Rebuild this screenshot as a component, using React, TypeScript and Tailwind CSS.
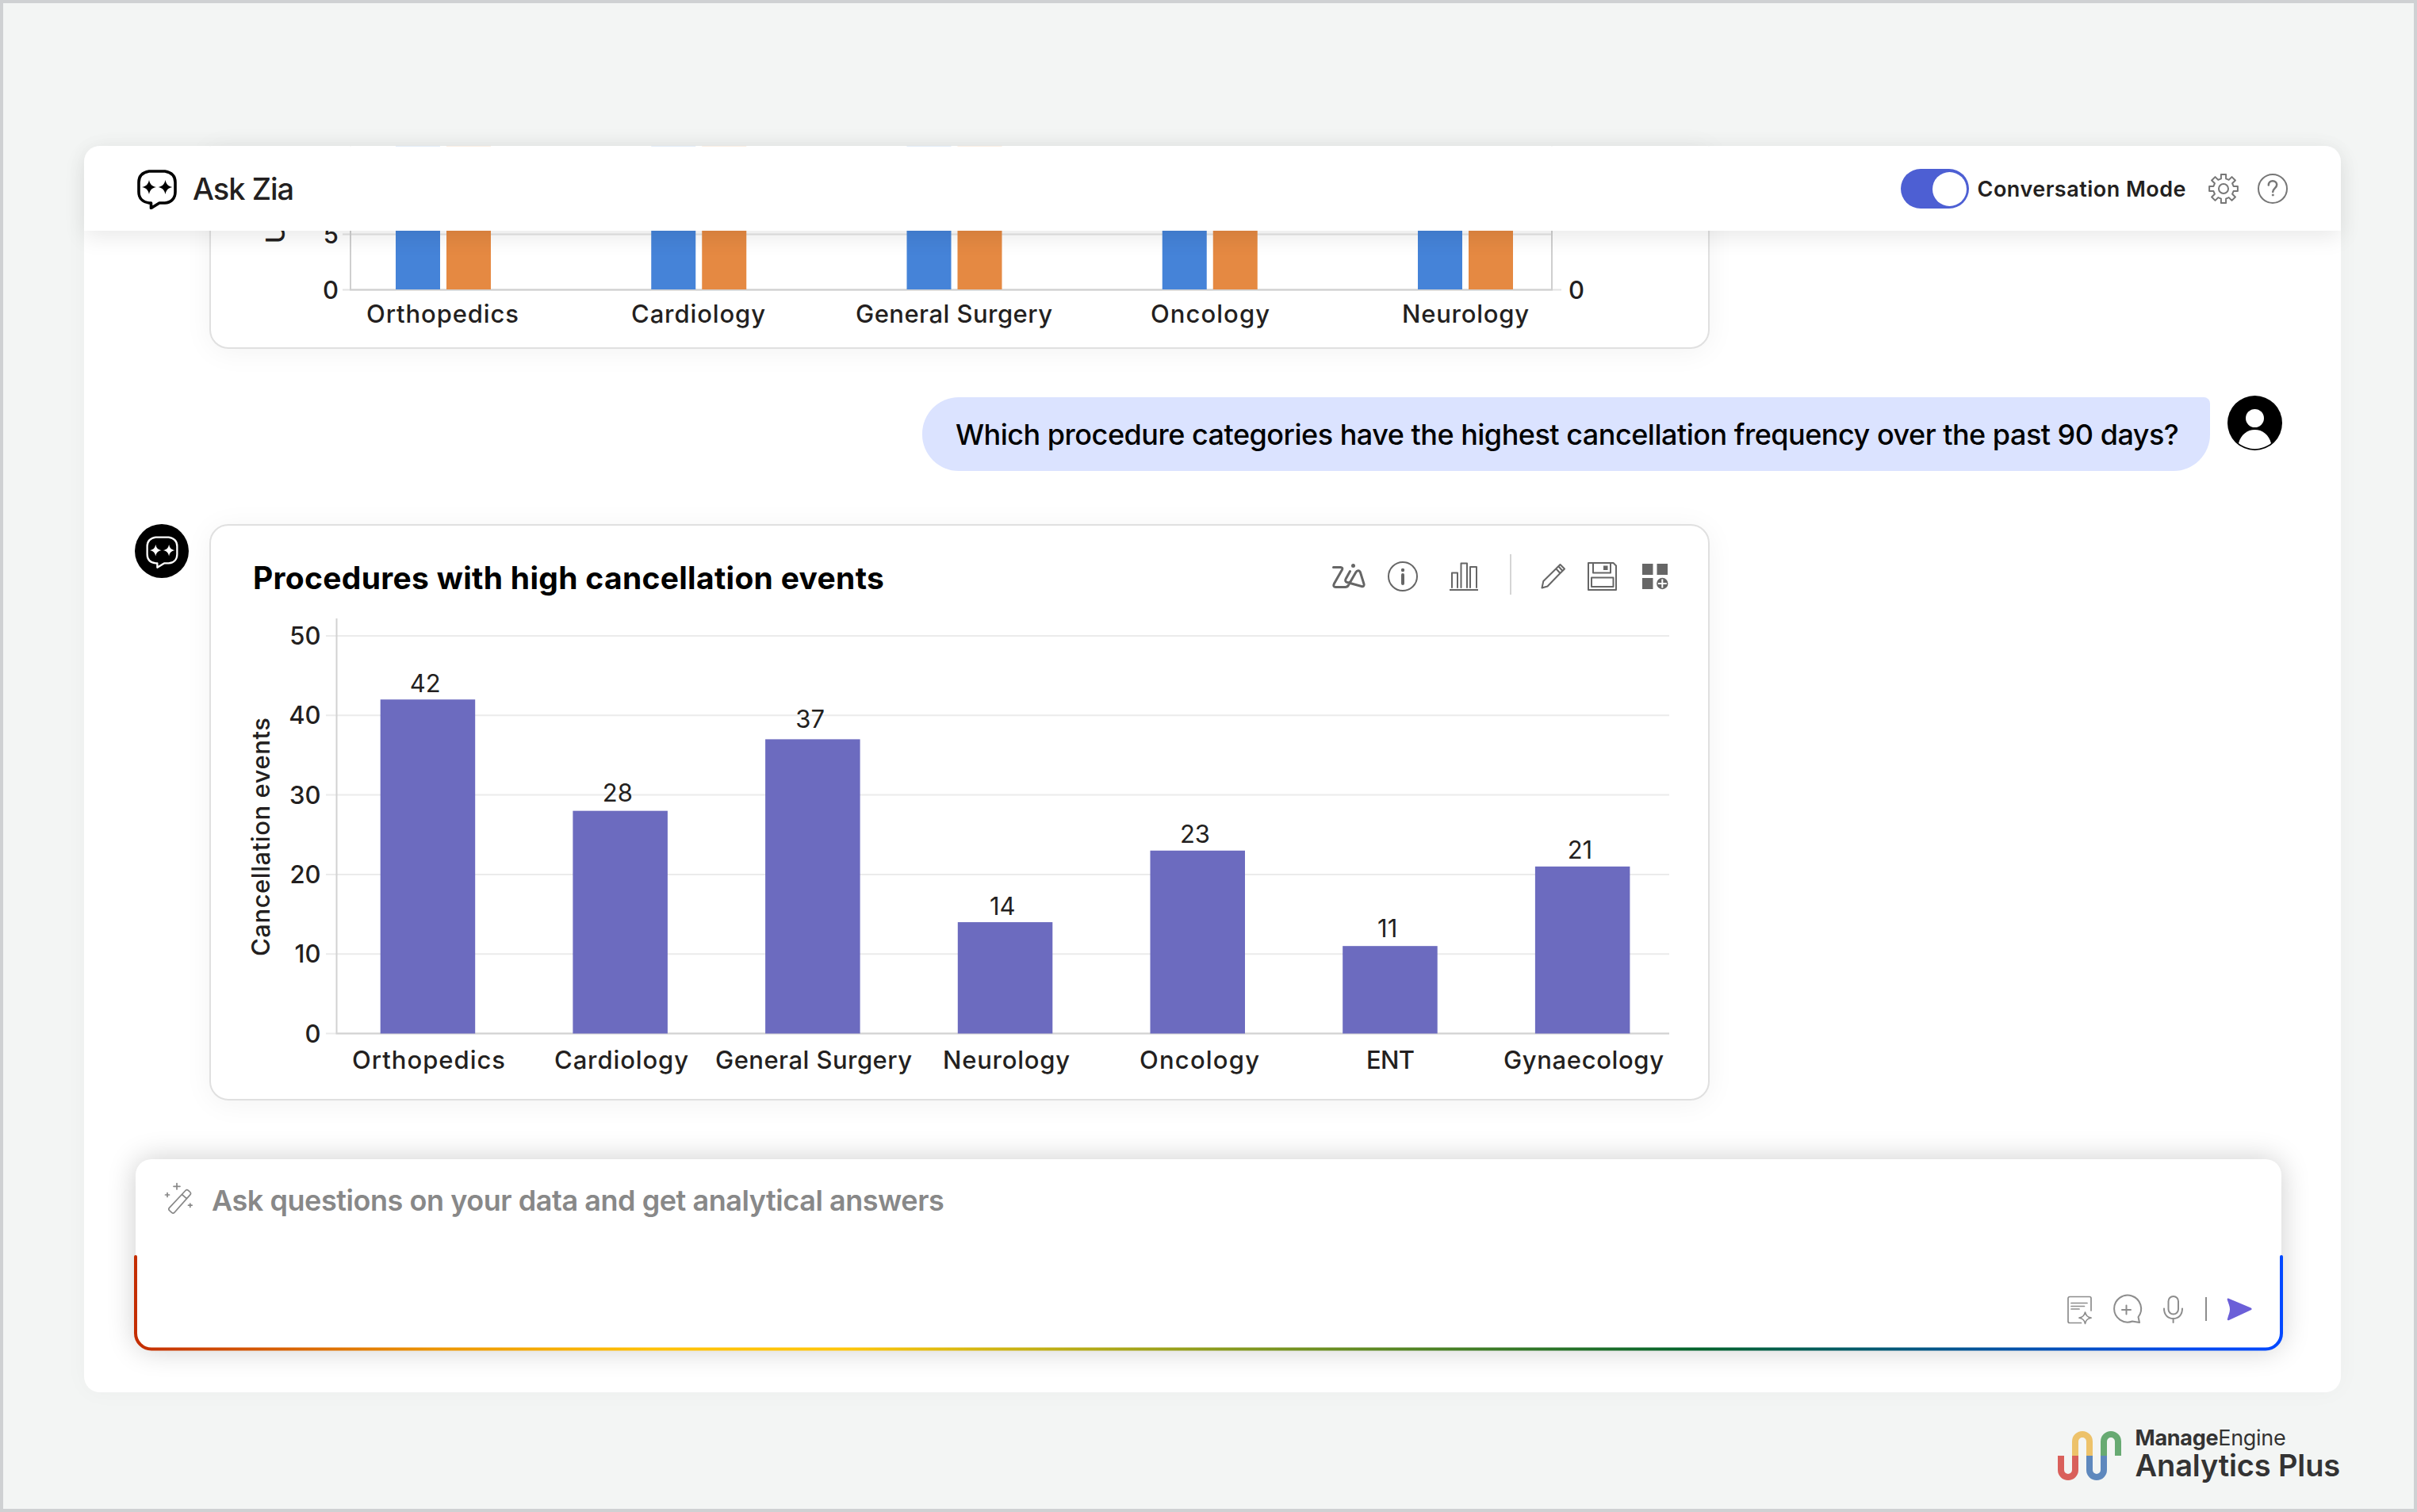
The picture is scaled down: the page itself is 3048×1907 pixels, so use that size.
import type { ReactNode } from 'react'

const FONT = "Inter, 'Liberation Sans', sans-serif"

// label = [left edge, width], gap = space between the bar and its value
const procedures = [
  { name: 'Orthopedics', value: 42, label: [444, 193], gap: 9 },
  { name: 'Cardiology', value: 28, label: [699, 169], gap: 12 },
  { name: 'General Surgery', value: 37, label: [902, 248], gap: 14 },
  { name: 'Neurology', value: 14, label: [1189, 160], gap: 9 },
  { name: 'Oncology', value: 23, label: [1437, 151], gap: 10 },
  { name: 'ENT', value: 11, label: [1723, 61], gap: 11 },
  { name: 'Gynaecology', value: 21, label: [1896, 202], gap: 10 },
]

const utilization = [
  { name: 'Orthopedics', label: [462, 192], top: 180 },
  { name: 'Cardiology', label: [796, 169], top: 180 },
  { name: 'General Surgery', label: [1079, 248], top: 180 },
  { name: 'Oncology', label: [1451, 150], top: 186 },
  { name: 'Neurology', label: [1768, 160], top: 186 },
]

function ZiaFace({ className, strokeWidth = 3.6 }: { className?: string; strokeWidth?: number }) {
  return (
    <svg viewBox="0 0 50 50" className={className} fill="none" stroke="currentColor" strokeWidth={strokeWidth}>
      <path d="M15 2h20C44 3.500 48 9 48 16v12c0 8-5 13.500-13 14h-7l-10.500 6.500V42H15C7 41 2 36 2 28V16C2 9 6 3.500 15 2z" strokeLinejoin="round" />
      <path d="M15 13c1.300 5.500 3 7.500 9 9-6 1.500-7.700 3.500-9 9-1.300-5.500-3-7.500-9-9 6-1.500 7.700-3.500 9-9zM35.500 13c1.300 5.500 3 7.500 9 9-6 1.500-7.700 3.500-9 9-1.300-5.500-3-7.500-9-9 6-1.500 7.700-3.500 9-9z" fill="currentColor" stroke="none" />
    </svg>
  )
}

function Icon({ w, h, className, children }: { w: number; h: number; className?: string; children: ReactNode }) {
  return (
    <svg width={w} height={h} viewBox={`0 0 ${w} ${h}`} fill="none" stroke="currentColor" strokeWidth={2} strokeLinejoin="round" strokeLinecap="round" className={`shrink-0 overflow-visible ${className ?? ''}`}>
      {children}
    </svg>
  )
}

function gearPath() {
  const pts: string[] = []
  for (let i = 0; i < 8; i++) {
    const base = (i * Math.PI) / 4
    const steps: [number, number][] = [[-0.24, 13], [-0.17, 18.2], [0.17, 18.2], [0.24, 13]]
    steps.forEach(([da, r]) => {
      const x = 19 + r * Math.sin(base + da)
      const y = 19 - r * Math.cos(base + da)
      pts.push(`${x.toFixed(1)} ${y.toFixed(1)}`)
    })
  }
  return `M${pts.join('L')}Z`
}

function Header() {
  return (
    <header className="relative z-10 flex h-[107px] shrink-0 items-center rounded-t-[20px] border-t border-white/85 bg-white bg-clip-padding pl-[67px] pr-[67px] shadow-[0_8px_28px_rgba(0,0,0,0.09)]">
      <ZiaFace className="mt-[2px] size-[50px]" />
      <h1 className="ml-[20px] text-[38px] font-medium leading-none tracking-[-1px] text-[#231f20]">Ask Zia</h1>
      <div className="ml-auto flex items-center">
        <div className="flex h-[50px] w-[86px] items-center justify-end rounded-full bg-[#4d5fd3] pr-[3px]">
          <div className="size-[43px] rounded-full bg-white" />
        </div>
        <span className="ml-[11px] whitespace-nowrap text-[27px] font-semibold leading-none tracking-[0.48px] text-[#231f20]">Conversation Mode</span>
        <Icon w={38} h={38} className="ml-[28px] text-[#777]">
          <path d={gearPath()} />
          <circle cx={19} cy={19} r={6} />
        </Icon>
        <Icon w={38} h={38} className="ml-[24px] text-[#777]">
          <circle cx={19} cy={19} r={18} />
          <path d="M13.800 14.500c0-3.200 2.200-5.200 5.200-5.200s5.200 2 5.200 4.800c0 4.200-5 4.400-5 9" strokeWidth={2.500} />
          <circle cx={19.200} cy={27} r={1} fill="currentColor" strokeWidth={1} />
        </Icon>
      </div>
    </header>
  )
}

// Both charts use page coordinates in their viewBox
function UtilizationChart() {
  return (
    <svg viewBox="266 184 1888 254" className="block h-[254px] w-[1888px]" fontFamily={FONT} fontSize={31} fontWeight={550} fill="#231f20">
      <path d="M432 295.500H1957" stroke="#e3e3e3" strokeWidth={2} />
      <path d="M432 365.500H1969" stroke="#e3e3e3" strokeWidth={2} />
      <path d="M442 184V365.500H1957V184" fill="none" stroke="#cfcfcf" strokeWidth={2} />
      {utilization.map((d, i) => {
        const x = 499 + i * 322.25
        return (
          <g key={d.name}>
            <rect x={x} y={d.top} width={56} height={365 - d.top} fill="#4583d8" />
            <rect x={x + 64} y={d.top} width={56} height={365 - d.top} fill="#e58942" />
            <text x={d.label[0]} y={407} textLength={d.label[1]}>{d.name}</text>
          </g>
        )
      })}
      <text x={427} y={306.500} textAnchor="end">5</text>
      <text x={427} y={377} textAnchor="end">0</text>
      <text x={1978} y={377}>0</text>
      <text transform="translate(359 307) rotate(-90)" fontSize={32}>U</text>
    </svg>
  )
}

function CancellationChart() {
  const zero = 1303.500
  const unit = 10.03
  return (
    <svg viewBox="266 770 1888 616" className="block h-[616px] w-[1888px]" fontFamily={FONT} fontSize={31} fontWeight={550} fill="#231f20">
      {[50, 40, 30, 20, 10, 0].map((t) => (
        <g key={t}>
          <path d={`M411 ${zero - t * unit}H2105`} stroke="#ebebeb" strokeWidth={2} />
          <text x={404.500} y={zero - t * unit + 11} textAnchor="end">{t}</text>
        </g>
      ))}
      <path d={`M424.500 780V${zero}H2105`} fill="none" stroke="#d2d2d2" strokeWidth={2} />
      {procedures.map((d, i) => {
        const x = 479.700 + i * 242.700
        const top = zero - d.value * unit
        return (
          <g key={d.name}>
            <rect x={x} y={top} width={119.500} height={zero - top} fill="#6c6bbf" />
            <text x={x + 56.500} y={top - d.gap} textAnchor="middle" fontWeight={400}>{d.value}</text>
            <text x={d.label[0]} y={1348} textLength={d.label[1]}>{d.name}</text>
          </g>
        )
      })}
      <text transform="translate(340 1206) rotate(-90)" textLength={301}>Cancellation events</text>
    </svg>
  )
}

function ChartToolbar() {
  return (
    <div className="flex items-center text-[#666]">
      <Icon w={42} h={32}>
        <path d="M1.500 4.500h9c2 0 3 1.300 2 3L2.500 25c-1.500 3-.5 4.500 2 4.500h12c2 0 3-.5 4-2.500l9.500-16.500c1.500-2.500 4.500-2.500 5.500.5l4.500 14.500c.8 2.500-.8 3.600-3 3L19 23.500c-2.500-.8-3-2.500-1.800-4.500L22.500 9.500" strokeWidth={3} />
        <circle cx={26.500} cy={2.500} r={2.500} fill="currentColor" stroke="none" />
      </Icon>
      <Icon w={38} h={38} className="ml-[28px]">
        <circle cx={19} cy={19} r={18} />
        <circle cx={19} cy={11} r={2.200} fill="currentColor" stroke="none" />
        <path d="M19 17v11" strokeWidth={4} />
      </Icon>
      <Icon w={38} h={36} className="ml-[39px]">
        <path d="M1 35h36" strokeLinecap="butt" />
        <path d="M4 32V13.500h7V32M15.500 32V1.500H23V32M27 32V6h8v26" />
      </Icon>
      <div className="-mt-[6px] ml-[39px] h-[51px] w-[2px] bg-[#d5d5d5]" />
      <Icon w={31} h={32} className="ml-[37px]">
        <path d="M1.500 30.500l1.800-8.500L16 9.500 24.500 1l5.500 5.500L21.500 15 8.500 28.500zM19.500 6.500l5 5.500M22.500 3.500l5 5.500" />
      </Icon>
      <Icon w={37} h={36} className="ml-[28px]">
        <path d="M1 1h31.500L36 4.500V35H1z" />
        <path d="M7 1v12.500h22V1M5 19.500h27.500v11.500H5z" />
        <rect x={20} y={4.500} width={5.500} height={5.500} fill="currentColor" stroke="none" />
      </Icon>
      <Icon w={32} h={33} className="ml-[32px]">
        <path d="M0 0h13.500v14H0zM18.500 0H32v14H18.500zM0 18h13.500v14H0z" fill="currentColor" stroke="none" />
        <circle cx={25.300} cy={25} r={7.200} fill="currentColor" stroke="none" />
        <path d="M25.300 19.500v11M19.800 25h11" stroke="#fff" strokeLinecap="butt" />
      </Icon>
    </div>
  )
}

function UserMessage() {
  return (
    <div className="mt-[59px] flex justify-end pr-[74px]">
      <div className="mt-[2px] flex h-[93px] w-[1624px] items-center rounded-[46px] rounded-tr-[8px] bg-[#dbe3ff] pl-[42px]">
        <p className="whitespace-nowrap text-[36px] font-medium leading-none tracking-[-0.5px] text-black">
          Which procedure categories have the highest cancellation frequency over the past 90 days?
        </p>
      </div>
      <svg viewBox="0 0 69 69" className="ml-[22px] size-[69px]">
        <circle cx={34.500} cy={34.500} r={34.500} fill="#000" />
        <circle cx={34.500} cy={28.500} r={11.500} fill="#fff" />
        <path d="M14 60C17 49 25 43 34.500 43S52 49 55 60C43 69.500 26 69.500 14 60z" fill="#fff" />
      </svg>
    </div>
  )
}

function PromptBox() {
  return (
    <div className="relative ml-[65px] mr-[75px] mt-[74px] h-[240px] rounded-[20px] bg-white shadow-[0_0_36px_rgba(0,0,0,0.2)]">
      {/* rainbow outline on the lower half */}
      <svg viewBox="0 0 2706 240" className="absolute inset-0 h-[240px] w-full overflow-visible" fill="none">
        <defs>
          <linearGradient id="rainbow" gradientUnits="userSpaceOnUse" x1={0} y1={0} x2={2706} y2={0}>
            <stop offset="0" stopColor="#c42d00" />
            <stop offset="0.14" stopColor="#ec9500" />
            <stop offset="0.24" stopColor="#ffc107" />
            <stop offset="0.33" stopColor="#ffc60a" />
            <stop offset="0.52" stopColor="#80971f" />
            <stop offset="0.73" stopColor="#00622c" />
            <stop offset="0.96" stopColor="#0048f0" />
            <stop offset="1" stopColor="#0048ff" />
          </linearGradient>
        </defs>
        <path d="M0 123V219.500a20 20 0 0 0 20 20H2686a20 20 0 0 0 20-20V123" stroke="url(#rainbow)" strokeWidth={4} strokeLinecap="round" />
      </svg>
      <div className="flex h-full flex-col justify-between pb-[33px] pl-[37px] pr-[37px] pt-[28px]">
        <div className="flex items-center text-[#888]">
          <Icon w={35} h={40} className="-mt-[5px]">
            <path d="M26 9.500a2.500 2.500 0 0 1 3.400-.2l2.300 2.200a2.500 2.500 0 0 1 .1 3.400L12 37.200a2.500 2.500 0 0 1-3.400.2l-3-2.700a2.500 2.500 0 0 1-.1-3.300zM21.500 14.500l6 5.300" strokeWidth={1.700} />
            <path d="M15 .5v7.500M11 4.300h8M3 12.500v5M.5 15h5M31.800 26v4.500M29.500 28.200h4.600" strokeWidth={1.700} />
          </Icon>
          <span className="ml-[24px] text-[36px] font-semibold leading-[48px] tracking-[-0.45px]">Ask questions on your data and get analytical answers</span>
        </div>
        <div className="flex items-center justify-end text-[#8d8d8d]">
          <Icon w={31} h={35}>
            <path d="M30 19V3.500a2 2 0 0 0-2-2H3a2 2 0 0 0-2 2v29a2 2 0 0 0 2 2h14.500M5 9.500h20M5 13.500h16.500M5 17h10" strokeWidth={1.700} />
            <path d="M22.500 21c1 4.500 2.800 6.200 7.500 7.200-4.700 1-6.500 2.700-7.500 7.200-1-4.500-2.800-6.200-7.500-7.200 4.700-1 6.500-2.700 7.500-7.200z" strokeWidth={1.700} />
          </Icon>
          <Icon w={36} h={36} className="ml-[25px]">
            <path d="M35 35l-1.500-7A17 17 0 1 0 26 33.500zM18.500 13.500v11M13 19h11" />
          </Icon>
          <Icon w={25} h={35} className="ml-[29px]">
            <rect x={6.500} y={1} width={12.500} height={22.500} rx={6.250} />
            <path d="M1 16.500c0 7.500 4.500 12.500 11.600 12.500S24 24 24 16.500M12.600 29v5" />
          </Icon>
          <div className="ml-[28px] h-[30px] w-[2px] bg-[#8d8d8d]" />
          <Icon w={32} h={29} className="ml-[25px] text-[#6b5fd8]">
            <path d="M2 .5l28.500 12c1.500.7 1.500 2.200 0 2.800L3 28c-1.800.7-2.500-.3-2-1.800C2.500 21 4 18 4 14.300S2.500 7.500.8 2.500C.5 1 .8.200 2 .5z" fill="currentColor" stroke="none" />
          </Icon>
        </div>
      </div>
    </div>
  )
}

function Brand() {
  return (
    <div className="ml-auto mr-[93px] mt-[43px] flex text-[#333]">
      <svg viewBox="0 0 81 62" className="mt-[6px] h-[62px] w-[81px]" fill="none" strokeWidth={8}>
        <path d="M4 31v18a9 9 0 0 0 18 0V31" stroke="#d9605b" />
        <path d="M22 31V13a9 9 0 0 1 18 0v18" stroke="#edc26a" />
        <path d="M40 31v18a9 9 0 0 0 18 0V31" stroke="#5e88bd" />
        <path d="M58 31V13a9 9 0 0 1 18 0v18" stroke="#67aa72" />
      </svg>
      <div className="ml-[17px] whitespace-nowrap">
        <div className="mt-px text-[27px] leading-[28px] tracking-[-0.3px]"><b className="font-bold">Manage</b>Engine</div>
        <div className="text-[38px] font-semibold leading-[40px] tracking-[-0.15px]">Analytics Plus</div>
      </div>
    </div>
  )
}

export default function App() {
  return (
    <div className="flex h-[1907px] w-[3048px] flex-col overflow-hidden border-4 border-[#cfd1d3] bg-[#f3f5f4] font-[Inter,'Liberation_Sans',sans-serif]">
      <main className="ml-[102px] mt-[180px] flex h-[1572px] w-[2846px] shrink-0 flex-col rounded-[20px] bg-white shadow-[0_0_30px_rgba(0,0,0,0.03)]">
        <Header />
        <div className="-mt-[107px] ml-[158px] w-[1892px] shrink-0 rounded-b-[24px] border-2 border-t-0 border-[#e0e0e0] bg-white shadow-[0_4px_36px_rgba(0,0,0,0.05)]">
          <UtilizationChart />
        </div>
        <UserMessage />
        <div className="mt-[67px] flex shrink-0">
          <div className="ml-[64px] flex size-[68px] items-center justify-center rounded-full bg-black text-white">
            <ZiaFace className="mt-[2px] size-[41px]" strokeWidth={2.800} />
          </div>
          <section className="ml-[26px] w-[1892px] rounded-[24px] border-2 border-[#e0e0e0] bg-white shadow-[0_4px_36px_rgba(0,0,0,0.05)]">
            <div className="flex h-[107px] items-center justify-between pl-[53px] pr-[51px] pt-[21px]">
              <h2 className="mt-[2px] whitespace-nowrap text-[39px] font-bold leading-none tracking-[0.3px] text-black">Procedures with high cancellation events</h2>
              <ChartToolbar />
            </div>
            <CancellationChart />
          </section>
        </div>
        <PromptBox />
      </main>
      <Brand />
    </div>
  )
}
